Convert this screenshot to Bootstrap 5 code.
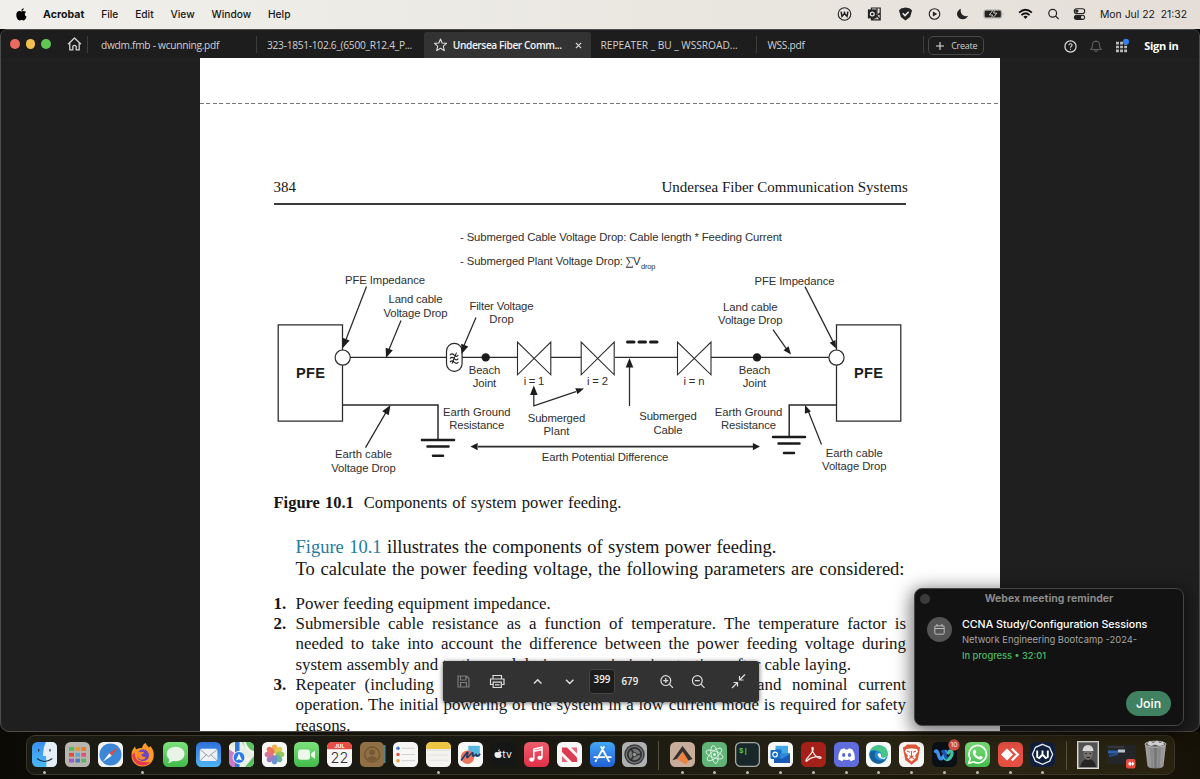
<!DOCTYPE html>
<html lang="en">
<head>
    <meta charset="UTF-8">
    <meta name="viewport" content="width=device-width, initial-scale=1.0">
    <title>Undersea Fiber Communication Systems</title>
    <link href="https://cdn.jsdelivr.net/npm/bootstrap@5.3.0/dist/css/bootstrap.min.css" rel="stylesheet">
    <style>
        body {
            height: 779px;
            background: #080805;
            font-family: Inter, "Liberation Sans", sans-serif;
        }
        svg { display: block; overflow: visible; flex: none; }

        /* menu bar */
        .menubar {
            height: 29px;
            padding: 0 13px 0 16px;
            background: linear-gradient(90deg, #f0efeb, #e9e6df 65%, #e5ded8);
            font-size: 10.2px;
            font-weight: 500;
            color: #161616;
        }
        .menubar b { font-size: 10.6px; }
        .menu-list { gap: 16.9px; margin-left: 16px; align-items: baseline; }
        .status { gap: 15px; }
        .clock { font-size: 10.4px; font-weight: 400; margin-left: -1px; padding-top: 1px; }

        /* acrobat window */
        .app-window {
            height: 703px;
            background: #1f1f1f;
            border: 1px solid #4c4d4c;
            border-radius: 7px 7px 9px 9px;
        }
        .tabbar {
            height: 28px;
            background: #1d1d1d;
            font: 500 10.2px/30px "Open Sans", "Noto Sans", sans-serif;
            letter-spacing: -.28px;
            color: #d0d0d0;
        }
        .lights { width: 50px; gap: 6px; padding-left: 9px; }
        .light { width: 10px; height: 10px; border-radius: 50%; }
        .doc-tab { width: 166.8px; padding-left: 10px; position: relative; white-space: nowrap; }
        .doc-tab.ruled::after {
            content: "";
            position: absolute;
            right: 0; top: 6px;
            width: 1px; height: 17px;
            background: #3d3d3d;
        }
        .doc-tab.wide-caps { letter-spacing: -.03px; }
        .doc-tab.current { background: #333; color: #f4f4f4; margin-top: 2px; line-height: 27px; height: 26px; border-radius: 3px 3px 0 0; }
        .cur-name { letter-spacing: -.42px; font-weight: 600; }
        .create-btn {
            height: 19px; width: 56px;
            border: 1px solid #484848; border-radius: 5px;
            font-size: 9px; line-height: 17px;
            margin: 6px 0 0 4px;
        }
        .sign-in { font-size: 11px; color: #fff; margin-left: 3px; margin-right: 4.5px; }

        /* document */
        .sheet {
            width: 800px; height: 673px;
            background: #fff;
            font-family: "Liberation Serif", "Times New Roman", serif;
            color: #161616;
        }
        .crop-line {
            height: 46px;
            background: repeating-linear-gradient(90deg, #777 0 4px, transparent 4px 6.4px) left bottom / 798px 1px no-repeat;
        }
        .sheet-body { padding: 73px 94px 0 73.5px; }
        .running-head { height: 28px; border-bottom: 2px solid #3a3a3a; font-size: 15px; line-height: 21px; }
        .caption-line { font-size: 16.5px; line-height: 20px; margin-top: 8px; width: 348px; }
        .intro { margin: 23px 0 0 22px; font-size: 18.5px; line-height: 22.4px; }
        .params { margin: 13px 0 0; font-size: 16.9px; line-height: 20.3px; }
        .params .num { width: 22px; flex: none; font-weight: bold; }
        .ln { text-align: justify; text-align-last: justify; white-space: nowrap; }
        .fig-link { color: #1d7c9c; }
        .diagram { margin-top: 10px; font-family: "Liberation Sans", Arial, sans-serif; font-size: 11.3px; fill: #303030; }

        /* page controls over the sheet */
        .page-tools {
            position: absolute; left: 442px; top: 631px;
            width: 316px; height: 41px;
            background: #323232; border-radius: 3px;
            box-shadow: 0 1px 5px rgba(0,0,0,.6);
            font: 600 9.8px "Open Sans", sans-serif; color: #eee;
        }
        .page-no { width: 26px; height: 25px; border: 1px solid #444; border-radius: 3px; background: #1c1c1c; line-height: 20px; text-align: center; }

        /* meeting reminder */
        .reminder {
            position: absolute; left: 914px; top: 588px;
            width: 270px; height: 138px;
            background: #121212; border: 1px solid #464646; border-radius: 8px;
            box-shadow: 0 4px 18px 3px rgba(0,0,0,.55);
            color: #fff;
        }
        .reminder-head { height: 20px; line-height: 20px; font-size: 10.5px; font-weight: 700; color: #898989; padding-right: 15px; }
        .closer { width: 10px; height: 10px; border-radius: 50%; background: #3b3b3b; margin-left: 5px; }
        .cal-badge { width: 25px; height: 25px; border-radius: 50%; background: #545454; }
        .meeting-title { font-size: 10.65px; font-weight: 500; line-height: 15px; }
        .meeting-sub { font-size: 9.4px; line-height: 15px; color: #a5a5a5; }
        .meeting-time { font-size: 9.3px; line-height: 18px; color: #4fb963; font-weight: 500; }
        .join-btn { width: 45px; height: 25px; border-radius: 13px; background: #3f8161; font-size: 12.4px; line-height: 26px; font-weight: 500; text-align: center; }

        /* dock */
        .dock-area { height: 47px; padding: 3px 25px 0 26px; background: linear-gradient(90deg, #0b0a05, #14120a 30%, #1c190a 70%, #171207); }
        .dock {
            height: 40px; gap: 7.8px; padding: 6px 6px 0 5px;
            background: linear-gradient(90deg, #1c1b13, #191911 45%, #2a2515 80%, #28220f);
            border: 1px solid #3a382b; border-radius: 9px;
        }
        .app { position: relative; width: 25px; height: 25px; flex: none; }
        .app.running::after {
            content: "";
            position: absolute; left: 11px; top: 28.5px;
            width: 3px; height: 3px; border-radius: 50%;
            background: #bdbbb0;
        }
        .dock-rule { width: 1px; height: 29px; margin: -1px 2.8px 0; background: #54513f; flex: none; }
    </style>
</head>
<body class="d-flex flex-column overflow-hidden position-relative">

    <!-- gradients shared by the dock icons -->
    <svg width="0" height="0" class="position-absolute"><defs>
        <linearGradient id="gBlue" x2="0" y2="1"><stop stop-color="#3b8ff0"/><stop offset="1" stop-color="#49b9f5"/></linearGradient>
        <linearGradient id="gMail" x2="0" y2="1"><stop stop-color="#2f6fdc"/><stop offset="1" stop-color="#4fb5f4"/></linearGradient>
        <linearGradient id="gGreen" x2="0" y2="1"><stop stop-color="#7de17c"/><stop offset="1" stop-color="#42bb4b"/></linearGradient>
        <linearGradient id="gStore" x2="0" y2="1"><stop stop-color="#44a7f4"/><stop offset="1" stop-color="#2060d8"/></linearGradient>
        <linearGradient id="gRed" x2="0" y2="1"><stop stop-color="#ed5d6c"/><stop offset="1" stop-color="#df3048"/></linearGradient>
        <linearGradient id="gCan" x2="1" y2="0"><stop stop-color="#aaa"/><stop offset=".5" stop-color="#777"/><stop offset="1" stop-color="#aaa"/></linearGradient>
    </defs></svg>

    <!-- Menu bar -->
    <header class="menubar d-flex align-items-center justify-content-between">
        <div class="d-flex align-items-center">
            <svg width="11" height="13" viewBox="0 0 11 13" fill="#000"><path d="M5.4 3.5C6 3.5 6.8 2.8 8 2.9C9 3 9.8 3.4 10.2 4.1C8.2 5.3 8.5 8 10.6 8.8C10 10.6 8.9 12.4 7.6 12.4C6.8 12.4 6.5 11.9 5.6 11.9C4.6 11.9 4.3 12.4 3.5 12.4C1.9 12.4 .3 9.5 .3 6.9C.3 4.4 1.8 3 3.4 3C4.3 3 5 3.5 5.4 3.5ZM7.7 .2C7.9 1.6 6.7 2.9 5.4 2.9C5.2 1.6 6.4 .4 7.7 .2Z"/></svg>
            <nav class="menu-list d-flex">
                <b>Acrobat</b><span>File</span><span>Edit</span><span>View</span><span>Window</span><span>Help</span>
            </nav>
        </div>
        <div class="status d-flex align-items-center">
            <svg width="15" height="14" viewBox="-7.5 -7 15 14" fill="none" stroke="#222"><circle r="6.3" stroke-width="1.1"/><path d="M-3.4-2.3L-2.5 2.4L0-.5L2.5 2.4L3.4-2.3M0-.5V-2.5" stroke-width="1.5"/></svg>
            <svg width="15" height="14" viewBox="-7.5 -7 15 14" fill="none" stroke="#222" stroke-width="1.2"><path d="M-3-4V-6H5.7V5.9H-3V4M5.5-1L-2.5 5.5M2.5 2L5.7 5.6M2.5-5.8V0"/><rect x="-6" y="-4" width="7.5" height="7.8" fill="#222"/><circle cx="-2.2" r="1.9" stroke="#eee"/></svg>
            <svg width="17" height="14" viewBox="-8.5 -7 17 14"><path d="M0-6.5L4.5-5.6L6.5-3.6L4.6 3L0 6.4L-4.6 3L-6.5-3.6L-4.5-5.6Z" fill="#222"/><path d="M-2.8-.7L-.5 1.6L3.2-2.2" fill="none" stroke="#eee" stroke-width="1.5"/></svg>
            <svg width="11" height="14" viewBox="-5.5 -7 11 14"><circle r="5.3" fill="none" stroke="#222" stroke-width="1.1"/><path d="M-1.6-2.5L2.7 0L-1.6 2.5Z" fill="#222"/></svg>
            <svg width="15" height="14" viewBox="-7.5 -7 15 14"><path d="M-1.7-5.2C-2.6 0 1 3.2 5.6 1.8C4 5.6-.5 6.3-3.3 4.2C-6.7 1.6-6-3.3-1.7-5.2Z" fill="#222"/></svg>
            <svg width="17" height="14" viewBox="-8.5 -7 17 14"><rect x="-10" y="-4.6" width="18.5" height="9.2" rx="2.6" fill="#aaa8a2"/><rect x="-8.7" y="-3.3" width="16" height="6.6" rx="1.4" fill="#222"/><path d="M9.2-1.5Q11 0 9.2 1.5Z" fill="#999"/><path d="M1.2-5.8L-4.2.9H-1L-2.2 5.8L3.4-.9H.2Z" fill="#111" stroke="#dcd9d2" stroke-width=".9"/></svg>
            <svg width="17" height="14" viewBox="-8.5 -7 17 14" fill="none" stroke="#111" stroke-width="1.7"><path d="M-6.4-1.3Q0-7.2 6.4-1.3M-4.1 1.1Q0-2.6 4.1 1.1"/><path d="M-2.2 2.6Q0 .7 2.2 2.6L0 5Z" fill="#111" stroke="none"/></svg>
            <svg width="9" height="14" viewBox="-4.5 -7 9 14" fill="none" stroke="#222" stroke-width="1.2"><circle cx="-.8" cy="-.8" r="3.9"/><path d="M2 2L5.2 5.2"/></svg>
            <svg width="13" height="14" viewBox="-6.5 -7 13 14"><rect x="-5.2" y="-5.2" width="10.4" height="4.7" rx="2.3" fill="none" stroke="#222" stroke-width="1.1"/><circle cx="-2.7" cy="-2.9" r="1.7" fill="#222"/><rect x="-5.6" y=".7" width="11.2" height="5.2" rx="2.6" fill="#222"/><circle cx="3" cy="3.3" r="1.5" fill="#e6e2dc"/></svg>
            <span class="clock">Mon Jul 22&nbsp; 21:32</span>
        </div>
    </header>

    <!-- Acrobat -->
    <main class="app-window position-relative overflow-hidden">
        <div class="tabbar d-flex">
            <div class="lights d-flex align-items-center">
                <span class="light" style="background:#ed6a5e"></span>
                <span class="light" style="background:#f4bf4f"></span>
                <span class="light" style="background:#61c554"></span>
            </div>
            <div class="doc-tab ruled d-flex align-items-center ps-3" style="width:37px">
                <svg width="15" height="14" viewBox="0 0 15 14" fill="none" stroke="#d2d2d2" stroke-width="1.3" stroke-linejoin="round"><path d="M1 7.2L7.5 1L14 7.2M2.8 6V12.9H5.8V9.2Q7.5 7.5 9.2 9.2V12.9H12.2V6"/></svg>
            </div>
            <div class="doc-tab ruled" style="padding-left:13px;width:169px">dwdm.fmb - wcunning.pdf</div>
            <div class="doc-tab">323-1851-102.6_(6500_R12.4_P...</div>
            <div class="doc-tab current d-flex align-items-center">
                <svg class="me-1" width="13" height="14" viewBox="0.5 0 13 14" fill="none" stroke="#ddd" stroke-width="1.1" stroke-linejoin="round"><path d="M7 1L8.7 5L13 5.4L9.8 8.2L10.8 12.6L7 10.3L3.2 12.6L4.2 8.2L1 5.4L5.3 5Z"/></svg>
                <span class="cur-name" style="margin-left:2px">Undersea Fiber Comm...</span>
                <svg class="ms-auto" style="margin-right:9px" width="7" height="7" viewBox="0 0 8 8" stroke="#ddd" stroke-width="1.3"><path d="M1 1L7 7M7 1L1 7"/></svg>
            </div>
            <div class="doc-tab ruled wide-caps">REPEATER _ BU _ WSSROAD...</div>
            <div class="doc-tab ruled">WSS.pdf</div>
            <div class="create-btn d-flex align-items-center">
                <svg style="margin:0 7px" width="8" height="8" viewBox="0 0 8 8" stroke="#ddd" stroke-width="1.1"><path d="M4 0V8M0 4H8"/></svg>Create
            </div>
            <div class="d-flex align-items-center ms-auto pe-3 pt-1" style="gap:13px">
                <svg width="13" height="13" viewBox="0 0 13 13"><circle cx="6.5" cy="6.5" r="5.6" fill="none" stroke="#ddd" stroke-width="1.2"/><path d="M4.9 5.2Q5 3.7 6.5 3.7Q8.1 3.7 8.1 5.1Q8.1 6 7.2 6.4Q6.5 6.8 6.5 7.7M6.5 8.7V9.8" fill="none" stroke="#ddd" stroke-width="1.1"/></svg>
                <svg width="12" height="14" viewBox="0 0 12 14" fill="none" stroke="#5b5b5b" stroke-width="1.1"><path d="M1 10.5Q2.6 9 2.5 5.6Q2.7 2.3 6 2.2Q9.3 2.3 9.5 5.6Q9.4 9 11 10.5ZM4.5 11Q6 14.5 7.5 11M6 .8V2"/></svg>
                <svg width="13" height="14" viewBox="0 0 13 14"><path d="M1 4.2H12M1 8H12M1 11.8H12" stroke="#bdbdbd" stroke-width="2.7" stroke-dasharray="2.9 1.2"/><circle cx="11" cy="2.8" r="3" fill="#2f80f0"/></svg>
                <b class="sign-in">Sign in</b>
            </div>
        </div>

        <article class="sheet mx-auto">
            <div class="crop-line"></div>
            <div class="sheet-body">
                <div class="running-head d-flex justify-content-between">
                    <span>384</span><div class="ln" style="width:244.5px">Undersea Fiber Communication Systems</div>
                </div>

                <!-- Figure 10.1 -->
                <svg class="diagram" width="640" height="270" viewBox="274 215.4 640 270">
                    <defs>
                        <path id="head" d="M0 0L-9.5-3.8V3.8Z" fill="#1d1d1d"/>
                    </defs>
                    <text x="460" y="241" textLength="322">- Submerged Cable Voltage Drop: Cable length * Feeding Current</text>
                    <text x="460" y="265.5" textLength="163">- Submerged Plant Voltage Drop:</text>
                    <text x="625" y="265.5" font-family="Liberation Serif" font-size="12">∑</text>
                    <text x="633" y="265.5">V</text>
                    <text x="641" y="269" font-size="7.5" textLength="14.5">drop</text>

                    <g fill="none" stroke="#2a2a2a" stroke-width="1.25">
                        <path d="M278.2 325.2H342.5V421.4H278.2ZM836.5 325.2H900.8V421.4H836.5Z"/>
                        <path d="M350 357.8H446M462 357.8H517.5M551 357.8H581M615 357.8H677.5M711 357.8H829"/>
                        <path d="M517.5 342.5V375.2L550.8 342.5V375.2ZM581.2 342.5V375.2L614.2 342.5V375.2ZM677.5 342.5V375.2L711 342.5V375.2Z" stroke-width="1.1"/>
                        <path d="M366.5 287L346 340M401 321L389 350M476 318L464 346M365.5 448L387 411M533.8 391V406.2L576 392M629.5 406.5V365M773 330L787 350M805 287L833 342M821.5 445L808 411"/>
                        <path d="M478 447H753" stroke-width="1.6"/>
                        <path d="M342.5 405.3H438V440M836.5 405.3H789.2V437" stroke-width="1.5"/>
                    </g>
                    <g fill="#fff" stroke="#2a2a2a" stroke-width="1.2">
                        <circle cx="342.7" cy="358" r="7.6"/>
                        <circle cx="836.5" cy="358" r="7.6"/>
                        <rect x="446.5" y="343.8" width="15.6" height="28" rx="7.8"/>
                    </g>
                    <path d="M450 355.5q2-2.5 4.2 0t4.2 0M450 359q2-2.5 4.2 0t4.2 0M450 362.5q2-2.5 4.2 0t4.2 0M456.5 353L452 364" fill="none" stroke="#222" stroke-width="1.1"/>
                    <circle cx="485.7" cy="357.8" r="4.2" fill="#1b1b1b"/>
                    <circle cx="757" cy="357.8" r="4.2" fill="#1b1b1b"/>
                    <g stroke="#1b1b1b" stroke-width="2.5" stroke-linecap="round">
                        <path d="M422 440.5H454M427.5 447H448.5M433 456.2H443M773 437.3H805M778.5 444H799.5M784 453.4H794"/>
                        <path d="M627.5 342.3H634M639 342.3H645.5M650.5 342.3H657" stroke-width="3"/>
                    </g>
                    <use href="#head" transform="translate(342.8 348.5) rotate(110)"/>
                    <use href="#head" transform="translate(386 358.3) rotate(110)"/>
                    <use href="#head" transform="translate(461.5 354.5) rotate(110)"/>
                    <use href="#head" transform="translate(390.5 405.5) rotate(-58)"/>
                    <use href="#head" transform="translate(533.8 386) rotate(-90)"/>
                    <use href="#head" transform="translate(584 389) rotate(-19) scale(.85)"/>
                    <use href="#head" transform="translate(629.5 358.5) rotate(-90)"/>
                    <use href="#head" transform="translate(791 355) rotate(52) scale(.85)"/>
                    <use href="#head" transform="translate(836 349) rotate(65) scale(.85)"/>
                    <use href="#head" transform="translate(805 405.5) rotate(-111) scale(.85)"/>
                    <use href="#head" transform="translate(470.5 447) rotate(180) scale(.75 .95)"/>
                    <use href="#head" transform="translate(760 447) scale(.75 .95)"/>

                    <g font-weight="bold" font-size="14.6" fill="#1d1d1d">
                        <text x="296" y="378" textLength="29">PFE</text>
                        <text x="854" y="378" textLength="29">PFE</text>
                    </g>
                    <g text-anchor="middle">
                        <text x="385" y="284.3" textLength="80">PFE Impedance</text>
                        <text x="415.5" y="303.8" textLength="54">Land cable</text>
                        <text x="415.5" y="317.3" textLength="64">Voltage Drop</text>
                        <text x="501.5" y="310.3" textLength="64">Filter Voltage</text>
                        <text x="501.5" y="323.3" textLength="24.5">Drop</text>
                        <text x="484.5" y="374.2" textLength="31.5">Beach</text>
                        <text x="484.5" y="387.2" textLength="23.5">Joint</text>
                        <text x="534" y="385.7" textLength="20.5">i = 1</text>
                        <text x="597.5" y="385.7" textLength="21">i = 2</text>
                        <text x="694" y="385.7" textLength="21">i = n</text>
                        <text x="476.7" y="416" textLength="67.5">Earth Ground</text>
                        <text x="476.7" y="429.3" textLength="55">Resistance</text>
                        <text x="556.5" y="422.5" textLength="57.5">Submerged</text>
                        <text x="556.5" y="435.7" textLength="26">Plant</text>
                        <text x="668" y="420.7" textLength="57.5">Submerged</text>
                        <text x="668" y="434" textLength="29">Cable</text>
                        <text x="605" y="461.7" textLength="126.5">Earth Potential Difference</text>
                        <text x="363.5" y="458.5" textLength="57">Earth cable</text>
                        <text x="363.5" y="472" textLength="64.5">Voltage Drop</text>
                        <text x="794.5" y="285.7" textLength="80">PFE Impedance</text>
                        <text x="750.3" y="311.3" textLength="54.5">Land cable</text>
                        <text x="750.3" y="324.8" textLength="64.5">Voltage Drop</text>
                        <text x="754.5" y="374.2" textLength="31.5">Beach</text>
                        <text x="754.5" y="387.2" textLength="23.5">Joint</text>
                        <text x="748.5" y="416" textLength="67.5">Earth Ground</text>
                        <text x="748.5" y="429.3" textLength="55">Resistance</text>
                        <text x="854.3" y="457" textLength="57">Earth cable</text>
                        <text x="854.3" y="470.5" textLength="64.5">Voltage Drop</text>
                    </g>
                </svg>

                <p class="caption-line ln mb-0"><b>Figure 10.1</b>&nbsp; Components of system power feeding.</p>

                <div class="intro">
                    <div class="ln" style="width:481px"><span class="fig-link">Figure 10.1</span> illustrates the components of system power feeding.</div>
                    <div class="ln" style="width:609px">To calculate the power feeding voltage, the following parameters are considered:</div>
                </div>

                <div class="params">
                    <div class="d-flex"><span class="num">1.</span><div class="ln" style="width:253px">Power feeding equipment impedance.</div></div>
                    <div class="d-flex"><span class="num">2.</span>
                        <div class="flex-grow-1">
                            <div class="ln">Submersible cable resistance as a function of temperature. The temperature factor is</div>
                            <div class="ln">needed to take into account the difference between the power feeding voltage during</div>
                            <div class="ln" style="width:554px">system assembly and testing and during commissioning testing, after cable laying.</div>
                        </div>
                    </div>
                    <div class="d-flex"><span class="num">3.</span>
                        <div class="flex-grow-1">
                            <div class="d-flex justify-content-between"><div class="ln" style="width:138.5px">Repeater (including</div><div class="ln" style="width:149px">and nominal current</div></div>
                            <div class="ln">operation. The initial powering of the system in a low current mode is required for safety</div>
                            <div>reasons.</div>
                        </div>
                    </div>
                </div>
            </div>
        </article>

        <div class="page-tools d-flex align-items-center">
            <svg width="317" height="41" viewBox="443 661 317 41" class="position-absolute" fill="none" stroke="#ddd" stroke-width="1.2">
                <path d="M458 676H466.5L469 678.5V687H458ZM460.5 676V680H466V676M460.5 687V682.5H466.5V687" stroke="#7b7b7b"/>
                <path d="M493 679V675.5H501.5V679M492.5 684.5H490.5V679H504V684.5H502M493.2 682.2H501.3V687.5H493.2ZM495 684.8H499.5"/>
                <path d="M534 683.5L537.7 679.8L541.4 683.5M566 679.8L569.7 683.5L573.4 679.8" stroke-width="1.5"/>
                <circle cx="665.8" cy="680.6" r="4.9"/><path d="M669.4 684.2L673 687.8M663.3 680.6H668.3M665.8 678.1V683.1"/>
                <circle cx="697.3" cy="680.6" r="4.9"/><path d="M700.9 684.2L704.5 687.8M694.8 680.6H699.8"/>
                <path d="M745 674.5L739.5 680M739.5 676V680H743.5M732 688L737.5 682.5M733.5 682.5H737.5V686.5"/>
            </svg>
            <span class="page-no" style="margin-left:146px">399</span><span style="margin-left:6.5px">679</span>
        </div>
    </main>

    <!-- Dock -->
    <footer class="dock-area">
        <div class="dock d-flex">
            <div class="app running"><svg width="25" height="25"><rect width="25" height="25" rx="5.5" fill="url(#gBlue)"/><path d="M14 0H19.5Q25 0 25 5.5V19.5Q25 25 19.5 25H14.5L14 14H11Q11.2 5 14 0Z" fill="#e6eef5"/><path d="M6.7 7V9.6M18 7V9.6M5 16.5Q12.5 22.5 20.3 16.5" fill="none" stroke="#1d3550" stroke-width="1.2"/></svg></div>
            <div class="app"><svg width="25" height="25"><rect width="25" height="25" rx="5.5" fill="#b6b5ae"/><g stroke-width="3.8"><path d="M4 7H9" stroke="#58b858"/><path d="M10.4 7H15" stroke="#e99b2e"/><path d="M16.3 7H21" stroke="#e87b35"/><path d="M4 12.8H9" stroke="#e34c45"/><path d="M10.4 12.8H15" stroke="#57a7d8"/><path d="M16.3 12.8H21" stroke="#e05072"/><path d="M4 18.6H9" stroke="#a05bc0"/><path d="M10.4 18.6H15" stroke="#4878c7"/><path d="M16.3 18.6H21" stroke="#61b158"/></g></svg></div>
            <div class="app"><svg width="25" height="25"><rect width="25" height="25" rx="5.5" fill="#f1f1f0"/><circle cx="12.5" cy="12.5" r="11" fill="#3b87d6"/><path d="M20.3 5.3L13.8 13.8L11.2 11.2Z" fill="#df4a44"/><path d="M4.8 19.8L11.2 11.2L13.8 13.8Z" fill="#f5f5f5"/></svg></div>
            <div class="app running"><svg width="25" height="25"><path d="M12.5 24.5C5.5 24.5 1.5 19.5 1.5 13.5Q1.5 8 5 4.5L6 7.5Q8.5 5.5 12 6Q12.5 2.5 15.5.7Q16.5 3.5 19 5.5Q20 4.5 20.3 4Q24 8 23.8 13.3C23.5 20 19 24.5 12.5 24.5Z" fill="#ff9b25"/><path d="M2 13Q3 20 8 22.5Q15 25.5 20.5 20Q14 21 9 19Q4 16 5 10Z" fill="#e8364f"/><circle cx="13" cy="13.2" r="6" fill="#7047ba"/><path d="M6.5 9Q10 10.5 14 9.7Q14 12 11 12.5Q12 15.5 16 15Q14 19 9.5 17Q6 14 6.5 9Z" fill="#ff8a2b"/></svg></div>
            <div class="app"><svg width="25" height="25"><rect width="25" height="25" rx="5.5" fill="url(#gGreen)"/><ellipse cx="12.6" cy="12" rx="9" ry="7.3" fill="#e8f4e6"/><path d="M6 16Q7 20 4.5 21Q8.5 21 10.5 18Z" fill="#e8f4e6"/></svg></div>
            <div class="app"><svg width="25" height="25"><rect width="25" height="25" rx="5.5" fill="url(#gMail)"/><rect x="3.8" y="6.8" width="17.6" height="12.2" rx="1.8" fill="#edf1f3"/><path d="M4 7.5L12.6 14.5L21.2 7.5M4.2 18.5L10.3 12.8M21 18.5L14.9 12.8" fill="none" stroke="#8996a4" stroke-width=".9"/></svg></div>
            <div class="app"><svg width="25" height="25"><clipPath id="mapClip"><rect width="25" height="25" rx="5.5"/></clipPath><g clip-path="url(#mapClip)"><path fill="#e9eee3" d="M0 0H25V25H0Z"/><path d="M13 0H25V9Q17 8 13 0Z" fill="#5ac466"/><path d="M15-2Q17 9 27 12" fill="none" stroke="#f3f1e8" stroke-width="2.5"/><path d="M0 6L8 12V25H0Z" fill="#c879c9"/><path d="M-1 4L26 23" stroke="#f5f3ea" stroke-width="4"/><path d="M16 25L25 14V25Z" fill="#58bc63"/><path d="M6 0H10.5V25H6Z" fill="#3179dc"/></g><circle cx="10" cy="15.5" r="6" fill="#2f7ae2" stroke="#fff"/><path d="M10 11.5L13 18.6L10 17.2L7 18.6Z" fill="#fff"/></svg></div>
            <div class="app"><svg width="25" height="25"><rect width="25" height="25" rx="5.5" fill="#f7f7f5"/><g opacity=".88"><ellipse cx="12.5" cy="7" rx="3" ry="4.4" fill="#f1a33b"/><ellipse cx="12.5" cy="7" rx="3" ry="4.4" fill="#d8c83c" transform="rotate(45 12.5 12.5)"/><ellipse cx="12.5" cy="7" rx="3" ry="4.4" fill="#8dbf49" transform="rotate(90 12.5 12.5)"/><ellipse cx="12.5" cy="7" rx="3" ry="4.4" fill="#55ad8d" transform="rotate(135 12.5 12.5)"/><ellipse cx="12.5" cy="7" rx="3" ry="4.4" fill="#5687ce" transform="rotate(180 12.5 12.5)"/><ellipse cx="12.5" cy="7" rx="3" ry="4.4" fill="#8c6abb" transform="rotate(225 12.5 12.5)"/><ellipse cx="12.5" cy="7" rx="3" ry="4.4" fill="#cf6293" transform="rotate(270 12.5 12.5)"/><ellipse cx="12.5" cy="7" rx="3" ry="4.4" fill="#e9644c" transform="rotate(315 12.5 12.5)"/></g></svg></div>
            <div class="app"><svg width="25" height="25"><rect width="25" height="25" rx="5.5" fill="url(#gGreen)"/><rect x="4" y="7.5" width="12" height="10.3" rx="2.7" fill="#edf8ea"/><path d="M17 11.5L21 8.5V17L17 14Z" fill="#edf8ea"/></svg></div>
            <div class="app"><svg width="25" height="25"><rect width="25" height="25" rx="5.5" fill="#f7f7f6"/><path d="M0 7.3V5.5Q0 0 5.5 0H19.5Q25 0 25 5.5V7.3Z" fill="#e84d43"/><text x="12.5" y="6.3" font-size="5.3" font-weight="bold" fill="#fff" text-anchor="middle">JUL</text><text x="12.5" y="21" font-size="14.5" font-weight="300" fill="#333" text-anchor="middle">22</text></svg></div>
            <div class="app"><svg width="25" height="25"><path d="M22 3H25.5V21H22Z" fill="#52858c"/><rect width="24" height="25" rx="5" fill="#916f45"/><circle cx="12.2" cy="12.5" r="7.5" fill="none" stroke="#765833" stroke-width="1.5"/><circle cx="12.2" cy="10.3" r="2.8" fill="#765833"/><path d="M7.2 17Q12.2 11 17.2 17L12.2 19.5Z" fill="#765833"/></svg></div>
            <div class="app"><svg width="25" height="25"><rect width="25" height="25" rx="5.5" fill="#f6f6f5"/><circle cx="5" cy="6.3" r="1.8" fill="#4378df"/><circle cx="5" cy="12.5" r="1.8" fill="#e4574b"/><circle cx="5" cy="18.7" r="1.8" fill="#e89b3c"/><path d="M9 6.3H22M9 12.5H22M9 18.7H22" stroke="#c7c7c6" stroke-width=".8"/></svg></div>
            <div class="app running"><svg width="25" height="25"><rect width="25" height="25" rx="5.5" fill="#f4f3ef"/><path d="M0 7V5.5Q0 0 5.5 0H19.5Q25 0 25 5.5V7Z" fill="#edc443"/><path d="M1 8.2H24" stroke="#aaa" stroke-dasharray=".8 .8" stroke-width=".6"/><path d="M2.5 13H22.5M2.5 18.3H22.5" stroke="#ddd" stroke-width=".8"/></svg></div>
            <div class="app"><svg width="25" height="25"><rect width="25" height="25" rx="5.5" fill="#f7f7f6"/><rect x="10.3" y="3.8" width="11.5" height="11" fill="#58b7df"/><circle cx="9.5" cy="15.3" r="6.7" fill="#ec7562"/><path d="M3 18.5L9 10.5Q10.7 9.7 9.2 13Q8 16.5 10 15L14 11Q15.5 10 14.8 13Q14.2 15.5 17 13Q18.5 11.5 18.4 13.5Q18.5 15.4 22.3 11.8" fill="none" stroke="#223a67" stroke-width="1.6"/></svg></div>
            <div class="app"><svg width="25" height="25"><rect width="25" height="25" rx="5.5" fill="#151716"/><path d="M7 10.2Q9.7 8.4 10.7 10.5Q8.7 12 10.9 13.5Q9.5 17 7 15.8Q4.5 17 3.5 13.2Q3.2 9.5 7 10.2ZM7 9.5Q7 7.7 8.8 7Q9 9 7 9.5Z" fill="#eee"/><text x="11.3" y="16.3" font-size="10" textLength="9.5" lengthAdjust="spacingAndGlyphs" fill="#eee">tv</text></svg></div>
            <div class="app"><svg width="25" height="25"><rect width="25" height="25" rx="5.5" fill="url(#gRed)"/><path d="M9.8 17V7L18 5.2V15.5M9.8 9.3L18 7.5" fill="none" stroke="#fff" stroke-width="1.5"/><ellipse cx="7.7" cy="17.6" rx="2.6" ry="2.1" fill="#fff"/><ellipse cx="15.9" cy="15.8" rx="2.6" ry="2.1" fill="#fff"/></svg></div>
            <div class="app"><svg width="25" height="25"><rect width="25" height="25" rx="5.5" fill="#f8f7f7"/><path d="M5 5.5H10L20 15.5V20H15L5 10Z" fill="#dc3c50"/><path d="M14 5.5H20V11.5ZM5 14L11 20H5Z" fill="#e2697b"/></svg></div>
            <div class="app"><svg width="25" height="25"><rect width="25" height="25" rx="5.5" fill="url(#gStore)"/><path d="M13.9 5L7.4 16.4M11.2 5L17.8 17M4.3 15.2H14.3M17 15.2H20.8M6.2 18.2L5.6 19.3M18.4 18.2L19 19.2" stroke="#fff" stroke-width="1.8" stroke-linecap="round"/></svg></div>
            <div class="app"><svg width="25" height="25"><rect width="25" height="25" rx="5.5" fill="#aeb0b1"/><circle cx="12.5" cy="12.5" r="9.5" fill="#777" stroke="#3b3d3e" stroke-width="1.5"/><circle cx="12.5" cy="12.5" r="6.7" fill="none" stroke="#303233" stroke-width="1.8"/><path d="M12.5 12.5H20M12.5 12.5L8.7 6.5M12.5 12.5L8.7 18.5" stroke="#2e3031" stroke-width="1.7"/><circle cx="12.5" cy="12.5" r="2.2" fill="#999" stroke="#333"/></svg></div>

            <div class="dock-rule"></div>

            <div class="app running"><svg width="25" height="25"><rect width="25" height="25" rx="5.5" fill="#c8ad9b"/><path d="M7.5 17.5L13 9.5L19.5 17L16 22.5Z" fill="#eb8240"/><path d="M2.3 18.3L12.5 4L22.5 17L18.5 18.5L12.7 9.5L6.8 17Z" fill="#36302d"/></svg></div>
            <div class="app running"><svg width="25" height="25"><rect width="25" height="25" rx="5.5" fill="#60b478"/><g fill="none" stroke="#dff3e3" stroke-width=".9"><ellipse cx="12.5" cy="12.5" rx="9" ry="3.4" transform="rotate(20 12.5 12.5)"/><ellipse cx="12.5" cy="12.5" rx="9" ry="3.4" transform="rotate(80 12.5 12.5)"/><ellipse cx="12.5" cy="12.5" rx="9" ry="3.4" transform="rotate(140 12.5 12.5)"/></g><circle cx="12.5" cy="12.5" r="1.5" fill="#e5f5e7"/></svg></div>
            <div class="app running"><svg width="25" height="25"><rect x=".6" y=".6" width="23.8" height="23.8" rx="5" fill="#18282a" stroke="#a4a7a5" stroke-width="1.3"/><text x="4" y="10.7" font-family="Liberation Mono" font-size="7.5" font-weight="bold" fill="#5dc742">$|</text></svg></div>
            <div class="app running"><svg width="25" height="25"><rect width="25" height="25" rx="5.5" fill="#f8f8f7"/><path d="M7.5 3.8H20V14H7.5Z" fill="#42a9e9"/><path d="M7.5 7.5H13.5V14H7.5Z" fill="#1470c4"/><path d="M6 12L22 11V21H6Z" fill="#2d86d6"/><path d="M6 13L14 17L22 12V21H6Z" fill="#185ab5"/><rect x="2.5" y="8" width="9.3" height="9" rx="1" fill="#176bc3"/><circle cx="7.1" cy="12.5" r="2.3" fill="none" stroke="#fff" stroke-width="1.2"/></svg></div>
            <div class="app running"><svg width="25" height="25"><rect width="25" height="25" rx="5.5" fill="#a52019"/><path d="M5 18.5C5.2 15.5 12 11.8 12.2 6.8Q12 4.3 11 6C10.5 9.5 15 15.8 19 16.3Q21.5 15.7 18.5 14.6C14 14.4 8 16 5.8 19Q4.8 19.7 5 18.5Z" fill="none" stroke="#f5ece9" stroke-width="1.3"/></svg></div>
            <div class="app running"><svg width="25" height="25"><rect width="25" height="25" rx="5.5" fill="#5e6cdd"/><path d="M4.3 17.5Q4.2 10.8 7 7.3L10.5 6.3L11.2 7.6H14L14.8 6.3L18.2 7.3Q21 11 20.8 17.5L16.7 19.3L15.7 17.5Q12.6 18.3 9.4 17.5L8.4 19.3Z" fill="#fff"/><ellipse cx="9.7" cy="13" rx="1.7" ry="1.9" fill="#5e6cdd"/><ellipse cx="15.5" cy="13" rx="1.7" ry="1.9" fill="#5e6cdd"/></svg></div>
            <div class="app running"><svg width="25" height="25"><rect width="25" height="25" rx="5.5" fill="#f8faf9"/><circle cx="12.5" cy="12.5" r="9.3" fill="#238ccf"/><path d="M4 9Q7 3 13 3.2C20 3.5 22.5 9 21.5 13Q20 16.2 15.5 15Q16.5 10 12 9Q7.5 7 4 9Z" fill="#47c687"/><path d="M3.3 11Q6.5 7.5 10.5 9.2Q7.5 11.5 9 15Q11.5 20 19.5 17.7Q15.5 23 10 21.3Q3.3 19 3.3 11Z" fill="#16619e"/><path d="M11.5 12Q12 17 18.5 17L21.7 13.5Q18 17 15 15Q16 13 14 11Z" fill="#fafafa"/></svg></div>
            <div class="app running"><svg width="25" height="25"><rect width="25" height="25" rx="5.5" fill="#f8f6f5"/><path d="M8 2.6H17L19 4.4L21 5.3L20.5 9L18.7 18L12.5 22.7L6.3 18L4.5 9L4 5.3L6 4.4Z" fill="#dd5737"/><path d="M7 7L11 6.5H14L18 7L19 9.5L16 14L17 15.5L12.5 19.5L8 15.5L9 14L6 9.5Z" fill="#fff"/><path d="M8 9L11 10.2M17 9L14 10.2M12.5 9V15L10.5 13.7M12.5 15L14.5 13.7M10 16.5L12.5 15.5L15 16.5" fill="none" stroke="#dd5737" stroke-width="1.1"/></svg></div>
            <div class="app running"><svg width="25" height="25"><rect width="25" height="25" rx="5.5" fill="#0b1016"/><path d="M3.5 9.5Q5 7.5 6.2 12Q7.5 18.5 10.2 16.2Q12.4 14 13.5 9.5" fill="none" stroke="#438fef" stroke-width="3.4" stroke-linecap="round"/><path d="M12.2 15.5Q14.5 19.5 18 16Q21 12 19.6 9.5Q17.5 7.5 16.3 11" fill="none" stroke="#3fc49f" stroke-width="3.2" stroke-linecap="round"/><path d="M10.6 9.6Q12 8 12.8 12Q13.3 14.5 14.2 16" fill="none" stroke="#1c55b7" stroke-width="3" stroke-linecap="round"/><circle cx="22" cy="3" r="5.7" fill="#d74c45"/><text x="22" y="5.4" font-size="6.8" fill="#fff" text-anchor="middle">10</text></svg></div>
            <div class="app running"><svg width="25" height="25"><rect width="25" height="25" rx="5.5" fill="url(#gGreen)"/><path d="M3.8 21.2L5.2 16.5A8.7 8.7 0 1 1 8.6 19.8Z" fill="none" stroke="#fff" stroke-width="1.7"/><path d="M8.4 8.3L10 7.5L11.3 10.3L10.3 11.7Q11.5 14 14 15L15.3 13.7L18 15Q17.5 18 14.5 17.6C10.5 17 6 11.8 8.4 8.3Z" fill="#fff"/></svg></div>
            <div class="app running"><svg width="25" height="25"><rect width="25" height="25" rx="5.5" fill="#e65043"/><path d="M9 6.5L15 12.5L9 18.5L3 12.5Z" fill="#fff"/><path d="M13.8 6.6L19.7 12.5L13.8 18.4" fill="none" stroke="#fff" stroke-width="2.3"/></svg></div>
            <div class="app running"><svg width="25" height="25"><rect width="25" height="25" rx="5.5" fill="#101f3e"/><path d="M12.5 2.3L19.5 5.3L22.6 12.2L19.8 19L12.5 22.4L5.2 19L2.4 12.2L5.5 5.3Z" fill="none" stroke="#eef1f5" stroke-width="1.3"/><path d="M7.2 8.5V15L9.3 16L12.5 12.5L15.7 16L17.8 15V8.5M12.5 12.5V8.5" fill="none" stroke="#fff" stroke-width="1.9"/></svg></div>

            <div class="dock-rule"></div>

            <div class="app" style="width:22px"><svg width="22" height="28" viewBox="0 1 22 28"><rect x=".7" y=".7" width="20.6" height="26.6" fill="#555" stroke="#ddd" stroke-width="1.4"/><path d="M3 26Q5 18 11 18Q18 18 19 26Z" fill="#252525"/><ellipse cx="11" cy="13" rx="4.5" ry="6" fill="#77716e"/><path d="M5.5 10Q6 4 11 4Q16 4 16.5 10Z" fill="#ddd"/><path d="M8.5 12.5H10M12.5 12.5H14M9.5 16.5H13" stroke="#222"/></svg></div>
            <div class="app" style="width:29px"><svg width="29" height="25"><path d="M0 3H29V22H0Z" fill="#24262a"/><path d="M1 5H17" stroke="#555" stroke-width=".8"/><rect x="1" y="8.5" width="10" height="3" fill="#2d62ad"/><rect x="11" y="7.5" width="7" height="3" fill="#bbc3cc"/><path d="M2 14L11 12" stroke="#244f91" stroke-width="2"/><rect x="19" y="17" width="9.5" height="9.5" rx="2" fill="#e64b3d"/><path d="M23 19.5L25 21.7L23 24L21 21.7ZM25 19.5L27.5 21.7L25 24" fill="#fff"/></svg></div>
            <div class="app" style="width:23px"><svg width="23" height="28" viewBox="0 2 23 28"><path d="M.8 3H22.2L19.5 26Q18.5 28.5 11.5 28.5Q4.5 28.5 3.5 26Z" fill="url(#gCan)"/><path d="M5 8L6.5 26M9 8L9.5 27M14 8L13.5 27M18 8L16.5 26" stroke="#a9a9a9" stroke-width=".5"/><ellipse cx="11.5" cy="4.2" rx="10.5" ry="3" fill="#5e5e5e" stroke="#c2c2c2"/><path d="M3 4L6 .8L9 3L13 .5L16 3L19 1.5L20 5L15 6L11 4.5L7 6Z" fill="#dedede"/></svg></div>
        </div>
    </footer>

    <!-- Webex reminder -->
    <aside class="reminder">
        <div class="reminder-head d-flex align-items-center"><span class="closer"></span><span class="flex-grow-1 text-center">Webex meeting reminder</span></div>
        <div class="d-flex" style="padding:8px 0 0 12px;gap:10px">
            <div class="cal-badge d-flex align-items-center justify-content-center">
                <svg width="11" height="11" viewBox="0 0 11 11" fill="none" stroke="#bbb"><rect x=".8" y="1.8" width="9.4" height="8.4" rx="1.3"/><path d="M1 4.5H10M3 0V2.5M8 0V2.5"/></svg>
            </div>
            <div>
                <div class="meeting-title">CCNA Study/Configuration Sessions</div>
                <div class="meeting-sub">Network Engineering Bootcamp -2024-</div>
                <div class="meeting-time">In progress • 32:01</div>
            </div>
        </div>
        <div class="join-btn ms-auto" style="margin-right:12px;margin-top:26px">Join</div>
    </aside>

    <script src="https://cdn.jsdelivr.net/npm/bootstrap@5.3.0/dist/js/bootstrap.bundle.min.js"></script>
</body>
</html>
